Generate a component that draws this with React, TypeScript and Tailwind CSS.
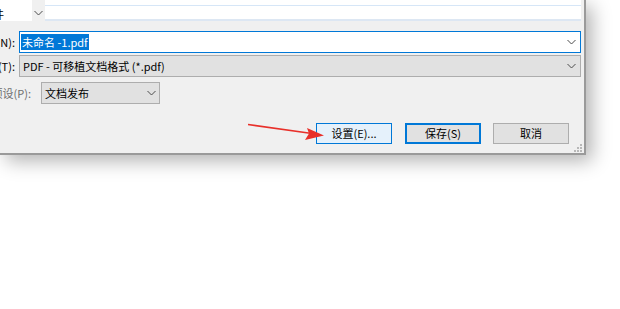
import React from "react";

const font = { fontFamily: '"Noto Sans CJK SC", "Liberation Sans", sans-serif' };

const Chevron: React.FC<{ className?: string }> = ({ className }) => (
  <svg width="9" height="6" viewBox="0 0 9 6" className={className}>
    <path d="M0.5 1 L4.5 5 L8.5 1" fill="none" stroke="#4d4d4d" strokeWidth="1" />
  </svg>
);

const Label: React.FC<{ text: string; w: string; pr: string; gray?: boolean }> = ({ text, w, pr, gray }) => (
  <div className={`${w} ${pr} h-full flex items-center justify-end overflow-hidden whitespace-nowrap shrink-0`}>
    <span className={`text-[11px] ${gray ? "text-[#6d6d6d]" : "text-black"}`}>{text}</span>
  </div>
);

const App: React.FC = () => {
  return (
    <div className="relative w-[620px] h-[309px] bg-white overflow-hidden" style={font}>
      <div className="w-[586px] h-[155px] bg-[#f0f0f0] border-r-2 border-b-2 border-[#9a9a9a] shadow-[6px_6px_18px_rgba(0,0,0,0.3)] flex flex-col">
        {/* top: nav pane + file list */}
        <div className="h-[21px] flex shrink-0">
          <div className="w-[32px] bg-white relative overflow-hidden">
            <span className="absolute left-[-7px] top-[9px] text-[11px] leading-none text-black">件</span>
          </div>
          <div className="w-[13px] bg-[#f0f0f0] flex items-start justify-center pt-[10px]">
            <Chevron />
          </div>
          <div className="flex-1 bg-white mr-[3px] border-b-2 border-[#dde7f3] flex flex-col">
            <div className="mt-[5px] h-[1px] bg-[#d6e6f7]" />
          </div>
        </div>

        {/* file name */}
        <div className="flex h-[22px] mt-[10px]">
          <Label text="文件名(N):" w="w-[19px]" pr="pr-[4px]" />
          <div className="w-[562px] h-full bg-white border border-[#0078d7] flex items-center pl-[1px] pr-[4px]">
            <span className="bg-[#0078d7] text-white text-[11px] leading-[16px] px-[1px] whitespace-pre">未命名 -1.pdf</span>
            <div className="flex-1" />
            <Chevron />
          </div>
        </div>

        {/* file type */}
        <div className="flex h-[22px] mt-[2px]">
          <Label text="保存类型(T):" w="w-[19px]" pr="pr-[4px]" />
          <div className="w-[562px] h-full bg-[#e1e1e1] border border-[#adadad] flex items-center pl-[3px] pr-[4px]">
            <span className="text-[11px] text-black whitespace-pre">PDF - 可移植文档格式 (*.pdf)</span>
            <div className="flex-1" />
            <Chevron />
          </div>
        </div>

        {/* preset */}
        <div className="flex h-[22px] mt-[5px] items-center">
          <Label text="Adobe PDF 预设(P):" w="w-[33px]" pr="pr-[2px]" gray />
          <div className="ml-[8px] w-[119px] h-full bg-[#e1e1e1] border border-[#adadad] flex items-center pl-[3px] pr-[3px]">
            <span className="text-[11px] text-black">文档发布</span>
            <div className="flex-1" />
            <Chevron />
          </div>
        </div>

        {/* buttons */}
        <div className="flex mt-[19px] h-[21px]">
          <div className="w-[316px] shrink-0" />
          <button className="w-[76px] h-full bg-[#e5f1fb] border border-[#0078d7] text-[11px] text-black flex items-center justify-center">
            设置(E)...
          </button>
          <button className="ml-[13px] w-[76px] h-full bg-[#e1e1e1] border-2 border-[#0078d7] text-[11px] text-black flex items-center justify-center">
            保存(S)
          </button>
          <button className="ml-[12px] w-[76px] h-full bg-[#e1e1e1] border border-[#adadad] text-[11px] text-black flex items-center justify-center">
            取消
          </button>
        </div>

        <div className="flex-1 flex items-end justify-end pr-[2px] pb-[1px]">
          <svg width="8" height="8" viewBox="0 0 8 8">
            <rect x="6" y="0" width="2" height="2" fill="#b8b8b8" />
            <rect x="3" y="3" width="2" height="2" fill="#b8b8b8" />
            <rect x="6" y="3" width="2" height="2" fill="#b8b8b8" />
            <rect x="0" y="6" width="2" height="2" fill="#b8b8b8" />
            <rect x="3" y="6" width="2" height="2" fill="#b8b8b8" />
            <rect x="6" y="6" width="2" height="2" fill="#b8b8b8" />
          </svg>
        </div>
      </div>

      {/* red annotation arrow */}
      <svg className="absolute left-0 top-0" width="620" height="309" viewBox="0 0 620 309">
        <line x1="248" y1="124.5" x2="312" y2="133.5" stroke="#e8302a" strokeWidth="1.6" />
        <polygon points="324,135.5 307,128 309,133.5 305,140" fill="#e8302a" />
      </svg>
    </div>
  );
};

export default App;
